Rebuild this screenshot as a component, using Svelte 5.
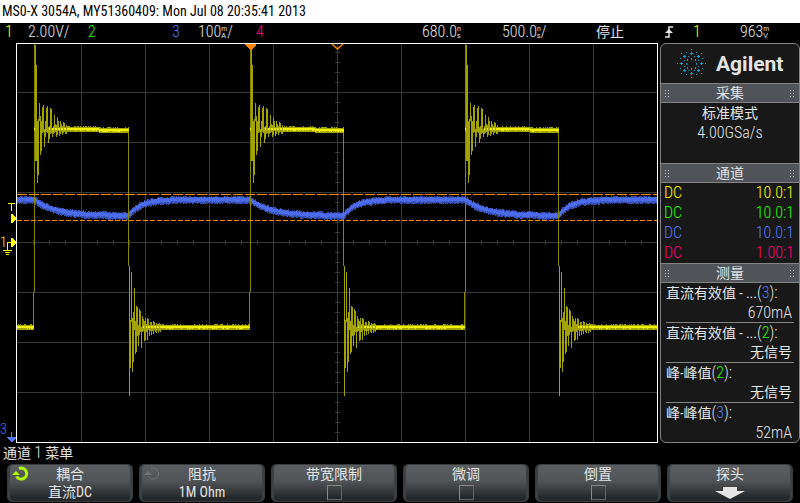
<script>
    const LEFT = 17;
    const RIGHT = 657;
    const HIGH = 129;
    const LOW = 327;

    const gridX = [81, 145, 209, 273, 337, 401, 465, 529, 593];
    const gridY = [92, 142, 192, 242, 292, 342, 392];

    // one pulse per entry: rising edge, falling edge
    const pulses = [
        { rise: 34, fall: 128 },
        { rise: 250, fall: 343 },
        { rise: 465, fall: 558 },
    ];

    // ringing after each edge, [top, bottom] around the settled level, one pair per column
    const ringHigh = [
        [-84, 32], [-64, 32], [-8, 54], [-10, 46], [-26, -8], [-13, 26], [-8, 22], [-22, 4],
        [-24, 3], [0, 18], [-8, 8], [-21, 3], [-23, 4], [-2, 14], [-3, 10], [-21, 5],
        [-20, 4], [0, 8], [-3, 5], [-14, 4], [-5, 3], [-4, 8], [-12, 6], [-8, 2],
        [-2, 7], [-8, 5], [-5, 3], [-3, 6], [-7, 4], [-6, 3], [-2, 5], [-4, 5],
    ];
    const ringLow = [
        [-61, 69], [-7, 41], [-55, -5], [-9, 45], [-15, 35], [-39, 3], [-6, 27], [-21, 25],
        [-20, 9], [-2, 19], [-18, 8], [-16, 5], [0, 21], [-11, 5], [-8, 4], [-6, 14],
        [-9, 13], [-3, 5], [-9, 13], [-8, 3], [-2, 9], [-5, 4], [-5, 8], [-2, 4],
        [-6, 7], [-5, 3], [-2, 5], [-4, 6], [-3, 3], [-3, 6], [-4, 4], [-3, 5],
    ];

    let seed = 7;
    function noise(n) {
        seed = (seed * 16807) % 2147483647;
        return seed % n;
    }

    function column(x, top, bottom) {
        return `M${x} ${top}h1V${bottom}h-1z`;
    }

    function yellowTrace() {
        let dim = "";
        let mid = "";
        let bright = "";

        for (let x = LEFT; x < RIGHT; x++) {
            let level = LOW;
            let ring = null;
            for (const p of pulses) {
                if (x >= p.rise && x <= p.fall) {
                    level = HIGH + Math.round(Math.max(0, x - p.rise - 50) / 30);
                    ring = ringHigh[x - p.rise - 1];
                } else if (x > p.fall && x - p.fall <= ringLow.length) {
                    ring = ringLow[x - p.fall - 1];
                }
            }
            if (ring) {
                mid += column(x, Math.max(44, level + ring[0]), level + ring[1]);
                if (ring[1] - ring[0] < 16 && x % 3) {
                    bright += column(x, level - 1, level + 1);
                }
            } else {
                mid += column(x, level - 2 - (noise(3) === 0), level + 3);
                bright += column(x, level - 1, level + 1 + (noise(3) === 0));
            }
        }

        for (const p of pulses) {
            dim += column(p.rise, 44, 292) + column(p.rise - 1, 292, LOW + 3);
            dim += column(p.fall, HIGH + 4, 266) + column(p.fall + 1, 266, 396);
        }
        return { dim, mid, bright };
    }

    function blueTrace() {
        let outer = "";
        let inner = "";
        for (let x = LEFT; x < RIGHT; x++) {
            let y = 200;
            for (const p of pulses) {
                if (x >= p.rise && x <= p.fall) {
                    y = 200 + 16 * (1 - Math.exp(-(x - p.rise) / 21));
                } else if (x > p.fall) {
                    y = 200 + 16 * Math.exp(-(x - p.fall) / 12);
                }
            }
            y = Math.round(y);
            outer += column(x, y - 3 - noise(2), y + 3 + noise(2));
            inner += column(x, y - 2 - noise(2), y + 1 + noise(2));
        }
        return { outer, inner };
    }

    function ticks() {
        let d = "";
        for (let x = 33; x < RIGHT; x += 16) d += `M${x}.5 240v5`;
        for (let y = 52; y < 442; y += 10) d += `M335 ${y}.5h5`;
        return d;
    }

    function dashes(y, length, gap) {
        let d = "";
        for (let x = LEFT; x < RIGHT; x += length + gap) {
            d += `M${x} ${y}h${Math.min(length, RIGHT - x)}v1H${x}z`;
        }
        return d;
    }

    // starburst: a small dot, a cross and a far dot on each of eight rays
    function sparkPath() {
        let d = "";
        for (let i = 0; i < 16; i++) {
            const a = (i * Math.PI) / 8;
            const at = (r) => [Math.round(14 + r * Math.cos(a)), Math.round(14 + r * Math.sin(a))];
            if (i % 2) {
                const [x, y] = at(8);
                const [fx, fy] = at(12);
                d += `M${x} ${y}h1v1h-1zM${fx} ${fy}h1v1h-1z`;
                continue;
            }
            const [nx, ny] = at(5);
            const [cx, cy] = at(10);
            const [fx, fy] = at(14);
            d += `M${nx} ${ny}h1v2h-1z`;
            d += `M${cx} ${cy - 1}h1v1h1v1h-1v1h-1v-1h-1v-1h1z`;
            d += `M${fx} ${fy}h1v1h-1z`;
        }
        return d;
    }

    const yellow = yellowTrace();
    const blue = blueTrace();

    const channels = [
        { coupling: "DC", probe: "10.0:1", color: "yellow" },
        { coupling: "DC", probe: "10.0:1", color: "green" },
        { coupling: "DC", probe: "10.0:1", color: "blue" },
        { coupling: "DC", probe: "1.00:1", color: "pink" },
    ];

    const measurements = [
        { name: "直流有效值 - ...", source: 3, color: "blue", value: "670mA" },
        { name: "直流有效值 - ...", source: 2, color: "green", value: "无信号" },
        { name: "峰-峰值", source: 2, color: "green", value: "无信号" },
        { name: "峰-峰值", source: 3, color: "blue", value: "52mA" },
    ];

    const softkeys = [
        { label: "耦合", value: "直流DC", knob: "active" },
        { label: "阻抗", value: "1M Ohm", knob: "idle" },
        { label: "带宽限制", check: true },
        { label: "微调", check: true },
        { label: "倒置", check: true },
        { label: "探头", arrow: true },
    ];
</script>

{#snippet unit(top, bottom)}
    <span class="unit"><span>{top}</span><span>{bottom}</span></span>
{/snippet}

{#snippet grip()}
    <svg class="grip" width="5" height="7" viewBox="0 0 5 7" aria-hidden="true">
        <path d="M0 0h1v1H0zM3 0h1v1H3zM0 3h1v1H0zM3 3h1v1H3zM0 6h1v1H0zM3 6h1v1H3z" fill="#c8c8c8" />
    </svg>
{/snippet}

{#snippet heading(text)}
    <h2>{@render grip()}<span>{text}</span>{@render grip()}</h2>
{/snippet}

<div class="scope">
    <header class="title">MS0-X 3054A, MY51360409: Mon Jul 08 20:35:41 2013</header>

    <div class="status">
        <span class="yellow">1</span>
        <span>2.00V/</span>
        <span class="green">2</span>
        <span class="blue">3</span>
        <span>100{@render unit("m", "A")}/</span>
        <span class="pink">4</span>
        <span>680.0{@render unit("n", "s")}</span>
        <span>500.0{@render unit("n", "s")}/</span>
        <span class="cjk">停止</span>
        <span>
            <svg class="edge" width="8" height="12" viewBox="0 0 8 12" aria-label="上升沿">
                <path d="M0 11h4V1h4" fill="none" stroke="#e4e4e4" stroke-width="1.5" />
                <path d="M4 3l4 4H0z" fill="#e4e4e4" />
            </svg>
        </span>
        <span class="yellow">1</span>
        <span>963{@render unit("m", "V")}</span>
    </div>

    <main>
        <svg class="plot" viewBox="0 43 658 400" shape-rendering="crispEdges">
            <g stroke="#383838">
                {#each gridX as x}
                    <line x1={x + 0.5} x2={x + 0.5} y1="44" y2="442" />
                {/each}
                {#each gridY as y}
                    <line x1="17" x2="657" y1={y + 0.5} y2={y + 0.5} />
                {/each}
                <path d={ticks()} />
            </g>

            <path d={blue.outer} fill="#3650b4" />
            <path d={blue.inner} fill="#4c6cec" />
            <path d={yellow.dim} fill="#868600" />
            <path d={yellow.mid} fill="#a2a200" />
            <path d={yellow.bright} fill="#f2f200" />

            <!-- measurement cursors -->
            <path d={dashes(194, 10, 2)} fill="#ff8800" />
            <path d={dashes(220, 5, 2)} fill="#ff8800" />

            <path d="M16 43h642v400H16zM17 44v398h640V44z" fill="#fff" fill-rule="evenodd" />

            <!-- trigger point and time reference -->
            <path d="M245 44h11v1l-5 5h-1l-5-5z" fill="#ff8800" />
            <path d="M332 44l5.500 5 5.500-5" fill="none" stroke="#ff8800" stroke-width="1.500" shape-rendering="auto" />

            <!-- trigger level -->
            <path d="M8 203h7v1h-3v7h-1v-7H8zM11 214h1l4 4v1l-4 4h-1z" fill="#ff0" />
            <!-- channel 1 ground -->
            <text class="marker" x="0" y="247" fill="#ff0">1</text>
            <path d="M11 238h1l4 4v1l-4 4h-1v-4H8v7h4v1H3v-1h4v-8h4zM5 252h5v1H5zM6 254h3v1H6z" fill="#ff0" />
            <!-- channel 3 ground, off screen -->
            <text class="marker" x="0" y="434" fill="#5577ff">3</text>
            <path d="M11 432h1v5h4v1l-4 4h-1l-4-4v-1h4z" fill="#5577ff" />
        </svg>

        <aside>
            <div class="brand">
                <svg width="30" height="30" viewBox="0 0 30 30" shape-rendering="crispEdges" aria-hidden="true">
                    <path d={sparkPath()} fill="#1e9cc4" />
                </svg>
                <strong>Agilent</strong>
            </div>

            {@render heading("采集")}
            <div class="acquire">
                <div class="cjk">标准模式</div>
                <div>4.00GSa/s</div>
            </div>

            {@render heading("通道")}
            <table>
                <tbody>
                    {#each channels as ch}
                        <tr class={ch.color}>
                            <td>{ch.coupling}</td>
                            <td class="probe">{ch.probe}</td>
                        </tr>
                    {/each}
                </tbody>
            </table>

            {@render heading("测量")}
            <dl>
                {#each measurements as m}
                    <div class="measure">
                        <dt><span class="cjk">{m.name}</span>(<span class={m.color}>{m.source}</span>):</dt>
                        <dd class:cjk={m.value === "无信号"}>{m.value}</dd>
                    </div>
                {/each}
            </dl>
        </aside>
    </main>

    <div class="menu-title">通道 <span class="digit">1</span> 菜单</div>

    <nav>
        {#each softkeys as key}
            {#if key.check}
                <label class="softkey">
                    <span>{key.label}</span>
                    <input type="checkbox" />
                </label>
            {:else}
                <button class="softkey" type="button">
                    {#if key.knob}
                        <svg class="knob {key.knob}" width="17" height="16" viewBox="0 0 17 16" aria-hidden="true">
                            <path d="M7 2.500A5.500 5.500 0 1 1 4.500 10.500" fill="none" stroke="currentColor" />
                            <path d="M0 9l4-4 4 4z" fill="currentColor" stroke="none" />
                        </svg>
                    {/if}
                    <span>{key.label}</span>
                    {#if key.arrow}
                        <svg class="down" width="30" height="12" viewBox="0 0 30 12" aria-hidden="true">
                            <path d="M8 0h14v4h8L15 12 0 4h8z" fill="#e4e4e4" />
                        </svg>
                    {:else}
                        <span class="value">{key.value}</span>
                    {/if}
                </button>
            {/if}
        {/each}
    </nav>
</div>

<style>
    :global(body) {
        margin: 0;
        background: #000;
    }

    .scope {
        font-family: "Roboto Condensed", Roboto, "Noto Sans CJK SC", sans-serif;
        font-size: 16px;
        font-weight: 300;
        line-height: 20px;
        color: #e4e4e4;
        background: #000;
    }

    .yellow {
        color: #ffff00;
    }

    .green {
        color: #22ff00;
    }

    .blue {
        color: #5577ff;
    }

    .pink {
        color: #ff0077;
    }

    .cjk {
        font-size: 14px;
        font-weight: 400;
    }

    .title {
        height: 23px;
        padding-left: 2px;
        font-size: 14px;
        font-weight: 400;
        line-height: 23px;
        color: #000;
        background: #fff;
        white-space: nowrap;
        overflow: hidden;
    }

    .status {
        display: grid;
        grid-template-columns: 23fr 60fr 84fr 26fr 58fr 166fr 80fr 94fr 69fr 28fr 47fr 60fr;
        height: 20px;
        padding-left: 5px;
        line-height: 18px;
        white-space: nowrap;
    }

    .status > span {
        min-width: 0;
    }

    .unit {
        display: inline-flex;
        flex-direction: column;
        font-family: "Liberation Sans", sans-serif;
        font-size: 7px;
        font-weight: 400;
        line-height: 7px;
        vertical-align: bottom;
        padding-bottom: 2px;
    }

    .edge {
        display: block;
        margin-top: 3px;
    }

    main {
        display: flex;
        align-items: flex-start;
        gap: 2px;
    }

    .plot {
        display: block;
        flex: 1;
        min-width: 0;
    }

    .marker {
        font-size: 14px;
    }

    aside {
        box-sizing: border-box;
        width: 140px;
        border: 1px solid #848484;
        border-radius: 6px;
        background: #181818;
        overflow: hidden;
    }

    .brand {
        display: flex;
        align-items: center;
        gap: 9px;
        height: 39px;
        padding-left: 16px;
    }

    .brand strong {
        font-family: Roboto, sans-serif;
        font-size: 21px;
        font-weight: 700;
        line-height: 38px;
    }

    h2 {
        display: flex;
        align-items: center;
        justify-content: space-between;
        box-sizing: border-box;
        height: 20px;
        margin: 0;
        padding: 0 4px;
        border-top: 1px solid #848484;
        border-bottom: 1px solid #848484;
        font-size: 14px;
        font-weight: 400;
        line-height: 18px;
        background: #505458;
    }

    .acquire {
        height: 60px;
        text-align: center;
    }

    table {
        width: 100%;
        border-collapse: collapse;
    }

    td {
        height: 20px;
        padding: 0 3px;
    }

    .probe {
        padding-right: 5px;
        text-align: right;
    }

    dl {
        margin: 0;
        padding: 0 5px;
    }

    .measure {
        box-sizing: border-box;
        height: 40px;
        border-bottom: 1px solid #848484;
        white-space: nowrap;
    }

    .measure:last-child {
        height: 39px;
        border-bottom: none;
    }

    dd {
        margin: 0;
        padding-right: 2px;
        line-height: 19px;
        text-align: right;
    }

    .menu-title {
        height: 21px;
        padding-left: 3px;
        font-size: 14px;
        font-weight: 400;
    }

    .digit {
        font-size: 16px;
        font-weight: 300;
    }

    nav {
        display: grid;
        grid-template-columns: repeat(6, 1fr);
        gap: 6px;
        padding: 0 7px 1px;
    }

    .softkey {
        position: relative;
        display: flex;
        flex-direction: column;
        align-items: center;
        box-sizing: border-box;
        height: 38px;
        padding: 0;
        border: 1px solid #383c3e;
        border-radius: 5px;
        font-family: inherit;
        font-size: 14px;
        font-weight: 400;
        line-height: 18px;
        color: #e4e4e4;
        background: linear-gradient(#5a5e60, #505456 45%, #24282a 90%);
        box-shadow: inset 2px 0 #3c4042, inset -2px 0 #3c4042;
    }

    .knob {
        position: absolute;
        top: 1px;
        left: 4px;
    }

    .active {
        color: #aaff00;
        stroke-width: 3;
    }

    .idle {
        color: #707274;
        stroke-width: 1;
    }

    .down {
        margin-top: 4px;
    }

    input {
        appearance: none;
        width: 15px;
        height: 15px;
        margin: 2px 0 0;
        border: 1px solid #626466;
        border-top-color: #868888;
        border-left-color: #868888;
    }
</style>
